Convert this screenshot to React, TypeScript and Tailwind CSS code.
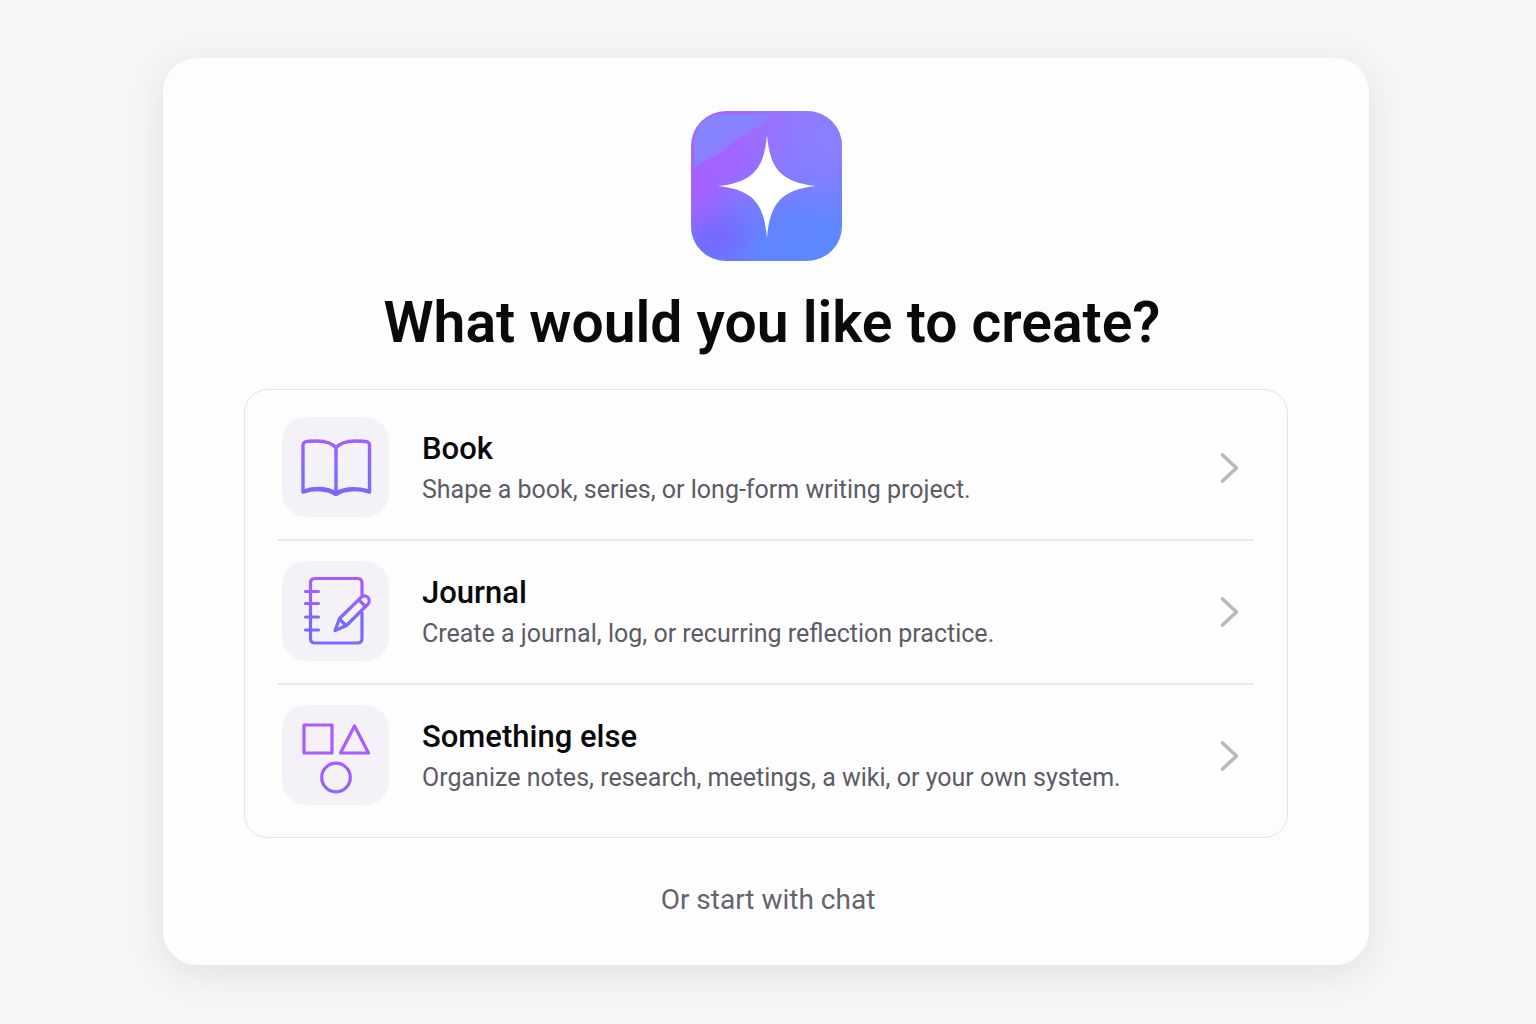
import React from 'react'

type Option = {
    title: string
    description: string
    icon: React.ReactNode
}

const BookIcon = () => (
    <svg className="w-[107px] h-[100px]" viewBox="0 0 107 100" fill="none" stroke="url(#book-stroke)" strokeWidth="3.4" strokeLinejoin="round" strokeLinecap="round" aria-hidden="true">
        <defs>
            <linearGradient id="book-stroke" gradientUnits="userSpaceOnUse" x1="0" y1="22" x2="0" y2="78">
                <stop offset="0" stopColor="#a65cff" />
                <stop offset="0.4" stopColor="#8a66ff" />
                <stop offset="1" stopColor="#7569ff" />
            </linearGradient>
        </defs>
        <path d="M54 31C50 26 43 24 35 24C29 24 25 24 22.500 25.200Q21 26 21 28V75C31 72 45 71 54 77.500C63 71 77 72 87.500 75V28Q87.500 26 86 25.200C83 24 79 24 73 24C65 24 58 26 54 31Z" />
        <path d="M54 31V77" />
        <path d="M22 73.800C32 71 44 70 54 76C64 70 76 71 86.500 73.800" />
    </svg>
)

const JournalIcon = () => (
    <svg className="w-[107px] h-[100px]" viewBox="0 0 107 100" fill="none" stroke="url(#journal-stroke)" strokeWidth="3.2" strokeLinejoin="round" strokeLinecap="round" aria-hidden="true">
        <defs>
            <linearGradient id="journal-stroke" gradientUnits="userSpaceOnUse" x1="0" y1="16" x2="0" y2="84">
                <stop offset="0" stopColor="#a65cff" />
                <stop offset="0.4" stopColor="#9a60ff" />
                <stop offset="0.65" stopColor="#7569ff" />
                <stop offset="1" stopColor="#7b6bff" />
            </linearGradient>
        </defs>
        <path d="M80 34V22Q80 17.500 75.500 17.500H33Q28.500 17.500 28.500 22V77.500Q28.500 82 33 82H75.500Q80 82 80 77.500V52" />
        <path d="M23.500 30.500H36.500M23.500 42.500H36.500M23.500 56H36.500M23.500 69H36.500" />
        <path d="M53 69.500L57.500 57.500L79 36.500C81.500 34 84.500 34.500 86 36.500C88 38.500 87.500 41.500 85.500 43.500L64.500 64.500L53 69.500Z" />
        <path d="M57.500 58L64 64.500M77 39L83.500 45.500" />
    </svg>
)

const ShapesIcon = () => (
    <svg className="w-[107px] h-[100px]" viewBox="0 0 107 100" fill="none" strokeWidth="3.2" strokeLinejoin="round" aria-hidden="true">
        <defs>
            <linearGradient id="circle-stroke" gradientUnits="userSpaceOnUse" x1="0" y1="57" x2="0" y2="87">
                <stop offset="0.3" stopColor="#a65cff" />
                <stop offset="1" stopColor="#8a64ff" />
            </linearGradient>
        </defs>
        <rect x="22" y="20" width="28" height="28" stroke="#a65cff" />
        <path d="M72.500 21L86.500 48H58.500Z" stroke="#a65cff" />
        <circle cx="54" cy="72.500" r="14.300" stroke="url(#circle-stroke)" />
    </svg>
)

const options: Option[] = [
    {
        title: 'Book',
        description: 'Shape a book, series, or long-form writing project.',
        icon: <BookIcon />
    },
    {
        title: 'Journal',
        description: 'Create a journal, log, or recurring reflection practice.',
        icon: <JournalIcon />
    },
    {
        title: 'Something else',
        description: 'Organize notes, research, meetings, a wiki, or your own system.',
        icon: <ShapesIcon />
    }
]

const AppLogo = () => (
    <svg className="w-[151px] h-[150px]" viewBox="0 0 151 150" aria-hidden="true">
        <defs>
            <linearGradient id="logo-fill" gradientUnits="userSpaceOnUse" x1="30" y1="24" x2="92" y2="134">
                <stop offset="0" stopColor="#a466ff" />
                <stop offset="0.25" stopColor="#a066ff" />
                <stop offset="0.5" stopColor="#8675ff" />
                <stop offset="0.8" stopColor="#6483ff" />
                <stop offset="1" stopColor="#5f87ff" />
            </linearGradient>
            <linearGradient id="logo-corner" gradientUnits="userSpaceOnUse" x1="12" y1="10" x2="39" y2="52">
                <stop offset="0.4" stopColor="#8684ff" />
                <stop offset="1" stopColor="#9876ff" />
            </linearGradient>
            <radialGradient id="logo-right" gradientUnits="userSpaceOnUse" cx="136" cy="26" r="90">
                <stop offset="0" stopColor="#8a80ff" />
                <stop offset="0.3" stopColor="#8a80ff" stopOpacity="0.8" />
                <stop offset="1" stopColor="#8a80ff" stopOpacity="0" />
            </radialGradient>
            <radialGradient id="logo-magenta" gradientUnits="userSpaceOnUse" cx="0" cy="80" r="48">
                <stop offset="0" stopColor="#a65fff" />
                <stop offset="1" stopColor="#a65fff" stopOpacity="0" />
            </radialGradient>
            <radialGradient id="logo-left" gradientUnits="userSpaceOnUse" cx="24" cy="126" r="46">
                <stop offset="0" stopColor="#7668ff" />
                <stop offset="0.3" stopColor="#7668ff" stopOpacity="0.8" />
                <stop offset="1" stopColor="#7668ff" stopOpacity="0" />
            </radialGradient>
        </defs>
        <rect width="151" height="150" rx="35" fill="url(#logo-fill)" />
        <rect width="151" height="150" rx="35" fill="url(#logo-right)" />
        <rect width="151" height="150" rx="35" fill="url(#logo-left)" />
        <rect width="151" height="150" rx="35" fill="url(#logo-magenta)" />
        <path d="M3 56V34Q4 4 34 3.500H76Q80 7 72 13C55 22 40 33 30 41C20 48 12 50 3 56Z" fill="url(#logo-corner)" />
        <path d="M76 24C79 57 89 71 125 75C89 79 79 93 76 127C73 93 63 79 27 75C63 71 73 57 76 24Z" fill="#fff" />
    </svg>
)

const OptionRow = ({ option }: { option: Option }) => (
    <li className="border-b-2 border-[#e9e9ed] last:border-b-0">
        <button type="button" className="flex w-full items-center gap-[33px] pt-5 pb-[22px] pl-1 pr-4 text-left cursor-pointer">
            <span className="shrink-0 rounded-3xl bg-[#f4f1f9]">{option.icon}</span>
            <span className="flex-1 pt-1">
                <span className="block text-[31px] leading-10 font-medium text-[#0a0a0c]">{option.title}</span>
                <span className="block mt-0.5 text-[25px] leading-[38px] text-[#5c5b66]">{option.description}</span>
            </span>
            <svg className="h-8 w-[18px] shrink-0" viewBox="0 0 18 32" fill="none" stroke="#b9b8c2" strokeWidth="3.6" strokeLinecap="round" strokeLinejoin="round" aria-hidden="true">
                <path d="M2.500 4L16.500 17L2.500 30" />
            </svg>
        </button>
    </li>
)

const App = () => {
    return (
        <main className="min-h-screen bg-[#f6f6f7] pt-[58px] pb-[59px] pl-4 pr-5 font-['Roboto','Liberation_Sans',sans-serif]">
            <div className="mx-auto flex max-w-[1206px] flex-col items-center rounded-[34px] bg-[#fdfdfd] px-[81px] pt-[53px] pb-11 shadow-[0_8px_36px_rgba(40,35,80,0.1)]">
                <AppLogo />
                <h1 className="mt-[26px] pl-3 text-center text-[57px] leading-[72px] font-semibold text-[#0a0a0c]">
                    What would you like to create?
                </h1>
                <ul className="mt-[30px] w-full rounded-3xl border border-[#e4e4e9] px-[33px] pt-[7px] pb-[10px]">
                    {options.map((option) => (
                        <OptionRow key={option.title} option={option} />
                    ))}
                </ul>
                <button type="button" className="mt-[41px] pl-1 text-[28px] leading-[42px] text-[#65646f] cursor-pointer">
                    Or start with chat
                </button>
            </div>
        </main>
    )
}

export default App
